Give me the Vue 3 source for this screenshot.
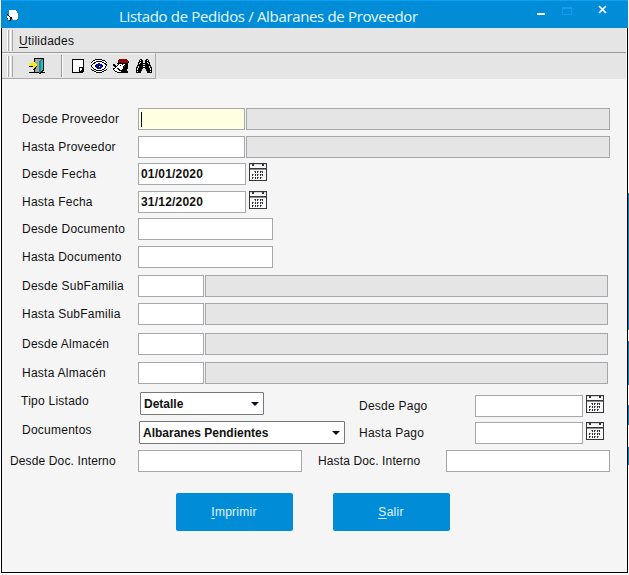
<script setup>
import { h } from 'vue'

const palette = { K: '#050505', W: '#ffffff', Y: '#f4ec16', T: '#158c91', C: '#25c4c8', B: '#15159c', R: '#8d0808', G: '#a2a2a2' }

const bitmaps = {
  exit: [
    '.....KKKKKKKKKK.',
    '.....KGGGGGGTTK.',
    '.....KGGGGGTTCK.',
    '....YKGGGGTTCCK.',
    '....YYGGGGTTCCK.',
    'YYYYYYYGGGTTCCK.',
    'YYYYYYYYGGTTCCK.',
    'YYYYYYYYGGTTCCK.',
    'KKKKYYYKGGTTCCK.',
    '....YYKGGGTTCCK.',
    '....YKKGGGTTCCK.',
    '....KKGGGGTTCCK.',
    '.....KGGGGTTCKK.',
    '.....KGGGGTTKK..',
    'KKKKKKKKKKTKKKKK',
    '..........KK....',
  ],
  page: [
    'KKKKKKKKKKKK',
    'KWWWWWWWWWWK',
    'KWWWWWWWWWWK',
    'KWWWWWWWWWWK',
    'KWWWWWWWWWWK',
    'KWWWWWWWWWWK',
    'KWWWWWWWWWWK',
    'KWWWWWWWWWWK',
    'KWWWWWWKKKKK',
    'KWWWWWWKWWKK',
    'KWWWWWWKWWKK',
    'KWWWWWWKWKKK',
    'KWWWWWWKKKKK',
    'KKKKKKKKKKK.',
  ],
  eye: [
    '....KKKKKKK.....',
    '..KKWWWWWWWKKK..',
    '.KWWWKKKKKKWWWK.',
    'KWWKKWWWWWWKKWWK',
    '..KKWWWBBWWWWKK.',
    '.KWWWBBBBBBWWWKK',
    'KWWWKBBKKBBKWWWK',
    'KWWWKBBKWBBKWWK.',
    '.KWWWBBBBBBWWWK.',
    '..KWWWBBBBWWWK..',
    'K..KKWWWWWWKK..K',
    '.KK..KKKKKK..KK.',
    '..WKKWWWWWWKKW..',
    '....WKKKKKKW....',
  ],
  detective: [
    '......RRRRRRRR..',
    '.....RRRRRRRRRR.',
    '.....RRRRRRRRRRR',
    '.....KRKRRRRRRRK',
    '....KKKKKKKKKKK.',
    'KK...KWWWKWWKKK.',
    'KKK.KWWKWWWKKKK.',
    '.KKKWWWWWWKRKKK.',
    '..KWWWWWWWKKKKK.',
    'KKWWKKWWWWKKKKK.',
    'KWWWWKKWWKKKKK..',
    '.KWWWWKKKKKKKK..',
    '..KKWWWWKKKKKKK.',
    '....KKKKKKKKKKK.',
  ],
  find: [
    '....KK....KK....',
    '...K.KK..KK.K...',
    '...KKKK..KKKK...',
    '..KK.KK..KK.KK..',
    '..K.KKKKKKKK.K..',
    '..KKKKK..KKKKK..',
    '.KKKKKKKKKKKKKK.',
    '.K.KKKKWWKKKK.K.',
    'KK.KKKKKKKKKK.KK',
    'K.KKKKK..KKKKK.K',
    'K.KKKK....KKKK.K',
    'KKKKKK....KKKKKK',
    'K.KKK......KKK.K',
    'KKKKK......KKKKK',
  ],
  form: [
    '..WWWWWWW..',
    '..WWWWWWWW.',
    '..WWWWWWWW.',
    '..WWWWWWWWW',
    'K.WWWWWWWWW',
    '.KWWWWWWWWW',
    'WWKWWWWWWWW',
    'WWWKKWWWWWW',
    'KWWKKWWWWWW',
    '.WWK..WWWW.',
    '..KK.......',
  ],
}

const PixelIcon = ({ name }) => {
  const rows = bitmaps[name]
  const cells = []
  rows.forEach((row, y) => [...row].forEach((c, x) => {
    if (palette[c]) cells.push(h('rect', { x, y, width: 1, height: 1, fill: palette[c] }))
  }))
  return h('svg', { width: rows[0].length, height: rows.length, 'shape-rendering': 'crispEdges' }, cells)
}
PixelIcon.props = ['name']

const CalendarIcon = () => h('svg', { width: 18, height: 18, viewBox: '0 0 18 18', 'shape-rendering': 'crispEdges' }, [
  h('path', { d: 'M0 0h18v18H0z', fill: '#35353a' }),
  h('path', { d: 'M1 2h16v3H1zM1 6h16v11H1z', fill: '#f8f8f8' }),
  h('path', { d: 'M1 6h16v1H1z', fill: '#8b8b90' }),
  h('path', { d: 'M1 1h2v1H1zM5 1h8v1H5zM15 1h2v1h-2z', fill: '#d8d8d8' }),
  h('path', { d: 'M3 1h2v2H3zM13 1h2v2h-2z', fill: '#35353a' }),
  h('path', { d: 'M6 8h1v2H6zM8 8h1v2H8zM11 8h1v2h-1zM13 8h1v2h-1zM3 11h1v2H3zM6 11h1v2H6zM8 11h1v2H8zM11 11h1v2h-1zM13 11h1v2h-1zM3 14h1v2H3zM6 14h1v2H6zM8 14h1v2H8zM11 14h1v2h-1z', fill: '#303035' }),
  h('path', { d: 'M5 8h1v1H5zM9 8h1v1H9zM12 8h1v1h-1zM4 11h1v1H4zM9 11h1v1H9zM12 11h1v1h-1zM4 14h1v1H4zM9 14h1v1H9zM12 14h1v1h-1z', fill: '#88888c' }),
])
</script>

<template>
  <div class="desktop">
    <main class="window">
      <header class="titlebar">
        <PixelIcon class="app-icon" name="form" />
        <h1>Listado de Pedidos / Albaranes de Proveedor</h1>
        <svg class="controls" width="72" height="14" shape-rendering="crispEdges">
          <path d="M0 10h8v2H0z" fill="#fff" />
          <path d="M25.5 5v6.500h9V4.500h-9zM25 5.500h9" fill="none" stroke="#149fee" />
          <path d="M62 3l7 7M69 3l-7 7" stroke="#fff" stroke-width="1.700" shape-rendering="auto" />
        </svg>
      </header>
      <nav class="menubar"><i class="grip"></i><span><u>U</u>tilidades</span></nav>
      <div class="toolbar">
        <div class="tools">
          <i class="grip"></i>
          <PixelIcon class="exit" name="exit" />
          <i class="sep"></i>
          <PixelIcon class="page" name="page" />
          <PixelIcon class="eye" name="eye" />
          <PixelIcon class="detective" name="detective" />
          <PixelIcon name="find" />
        </div>
      </div>
      <form class="form" @submit.prevent>
        <div class="row"><label>Desde Proveedor</label><div class="field code active"><i class="caret"></i></div><div class="field fill"></div></div>
        <div class="row g6"><label>Hasta Proveedor</label><div class="field code"></div><div class="field fill"></div></div>
        <div class="row g5"><label>Desde Fecha</label><div class="field date">01/01/2020</div><CalendarIcon /></div>
        <div class="row g6"><label>Hasta Fecha</label><div class="field date">31/12/2020</div><CalendarIcon /></div>
        <div class="row g5"><label>Desde Documento</label><div class="field doc"></div></div>
        <div class="row g6"><label>Hasta Documento</label><div class="field doc"></div></div>
        <div class="row g7 short"><label>Desde SubFamilia</label><div class="field small"></div><div class="field fill"></div></div>
        <div class="row g6 short"><label>Hasta SubFamilia</label><div class="field small"></div><div class="field fill"></div></div>
        <div class="row g8 short"><label>Desde Almacén</label><div class="field small"></div><div class="field fill"></div></div>
        <div class="row g7 short"><label>Hasta Almacén</label><div class="field small"></div><div class="field fill"></div></div>
        <div class="split">
          <div class="selects">
            <div class="row tipo"><label>Tipo Listado</label><div class="select kind">Detalle<i></i></div></div>
            <div class="row docs"><label>Documentos</label><div class="select pending">Albaranes Pendientes<i></i></div></div>
          </div>
          <div class="payments">
            <div class="row"><label>Desde Pago</label><div class="field pay"></div><CalendarIcon /></div>
            <div class="row g5"><label>Hasta Pago</label><div class="field pay"></div><CalendarIcon /></div>
          </div>
        </div>
        <div class="row internal"><label>Desde Doc. Interno</label><div class="field interno"></div><label class="second">Hasta Doc. Interno</label><div class="field interno"></div></div>
        <div class="actions"><button type="button"><span><u>I</u>mprimir</span></button><button type="button"><span><u>S</u>alir</span></button></div>
      </form>
    </main>
    <aside class="edge"><i class="e1"></i><i class="e2"></i><i class="e3"></i><i class="e4"></i></aside>
  </div>
</template>

<style>
body { background: #fff; overflow: hidden; }
</style>

<style scoped>
* { box-sizing: border-box; }
.desktop { display: flex; width: 629px; height: 575px; padding-left: 1px; background: #fdfdfd; font: 12px "Liberation Sans", Arial, sans-serif; letter-spacing: .25px; color: #111; }
.window { width: 627px; height: 573px; background: #f5f5f5; border: solid #000; border-width: 0 1px 1px; }
svg { display: block; flex: none; }
.titlebar { display: flex; height: 28px; margin: 0 -1px; background: #008cd7; border-top: 1px solid #0ba2f4; }
.app-icon { margin: 9px 0 0 6px; }
h1 { width: 310px; margin: 5px 0 0 101px; font: 400 15px/21px "Open Sans", "Noto Sans", sans-serif; letter-spacing: -.34px; color: #e8f8ff; white-space: nowrap; }
.controls { margin: 2px 0 0 108px; }
.menubar { display: flex; height: 25px; margin-right: 1px; background: #e5e5e5; border-bottom: 1px solid #999; padding-left: 5px; }
.menubar span { margin: 6px 0 0 6px; line-height: 14px; }
.grip { width: 6px; height: 21px; margin-top: 2px; border: solid #aaa; border-width: 0 1px; border-left-color: #fff; background: linear-gradient(90deg, #aaa 1px, #e5e5e5 1px 2px, #fff 2px 3px, #e5e5e5 3px); }
u { text-decoration: underline; text-underline-offset: 2px; text-decoration-thickness: 1px; }
.toolbar { height: 26px; margin-right: 1px; background: #e5e5e5; }
.tools { display: flex; width: 154px; height: 26px; padding-left: 5px; border: solid #aaa; border-width: 0 1px 1px 0; border-top: 1px solid #f5f5f5; }
.tools svg { margin-top: 5px; }
.tools .exit { margin: 4px 0 0 16px; }
.sep { width: 2px; height: 22px; margin: 1px 9px 0 16px; border-left: 1px solid #999; border-right: 1px solid #fff; }
.tools .page { margin-top: 5px; }
.tools .eye { margin-left: 7px; }
.tools .detective { margin: 5px 7px 0 6px; }
.form { padding: 29px 0 0 20px; }
.row { display: flex; width: 588px; height: 22px; gap: 1px; }
.row label { width: 115px; flex: none; line-height: 22px; white-space: nowrap; }
.row.short { width: 586px; }
.g5 { margin-top: 5px; }
.g6 { margin-top: 6px; }
.g7 { margin-top: 7px; }
.g8 { margin-top: 8px; }
.field { height: 22px; border: 1px solid #a5a7aa; background: #fff; flex: none; }
.code { width: 107px; padding: 3px 2px; }
.active { background: #ffffe1; }
.caret { display: block; width: 1px; height: 15px; background: #000; }
.fill { flex: 1; background: #e5e5e5; }
.date { width: 108px; padding-left: 2px; margin-right: 2px; font-weight: 700; line-height: 20px; letter-spacing: .2px; }
.doc { width: 135px; }
.small { width: 66px; }
.split { display: flex; margin-top: 8px; }
.selects { width: 323px; }
.tipo label { width: 118px; margin-left: -1px; line-height: 18px; }
.docs { margin-top: 7px; }
.docs label { width: 116px; line-height: 18px; }
.select { display: flex; justify-content: space-between; height: 23px; padding: 0 4px 0 3px; border: 1px solid #76787a; border-radius: 1px; background: #fff; font-weight: 700; line-height: 23px; letter-spacing: 0; }
.select i { align-self: center; border: solid transparent; border-width: 4px 4px 0; border-top-color: #101025; }
.kind { width: 124px; }
.pending { width: 206px; }
.payments { width: 253px; padding: 3px 0 0 14px; }
.payments .row { width: 247px; }
.payments label { width: 115px; }
.pay { width: 108px; margin-right: 2px; }
.internal { margin: 6px 0 0 -12px; width: 602px; letter-spacing: .13px; }
.internal label { width: 127px; }
.internal .second { width: 127px; margin-left: 15px; }
.interno { width: 164px; }
.actions { display: flex; gap: 40px; margin: 21px 0 0 154px; }
button { width: 117px; height: 38px; padding: 0 1px 0 0; border: 0; border-radius: 2px; background: #008cd7; color: #e4f6ff; font: inherit; letter-spacing: .25px; }
.edge { display: flex; flex-direction: column; width: 1px; padding-top: 193px; }
.edge i { background: #087ebf; flex: none; }
.e1 { height: 137px; }
.e2 { height: 44px; margin-top: 11px; }
.e3 { height: 20px; margin-top: 20px; }
.e4 { height: 18px; margin-top: 22px; }
</style>
